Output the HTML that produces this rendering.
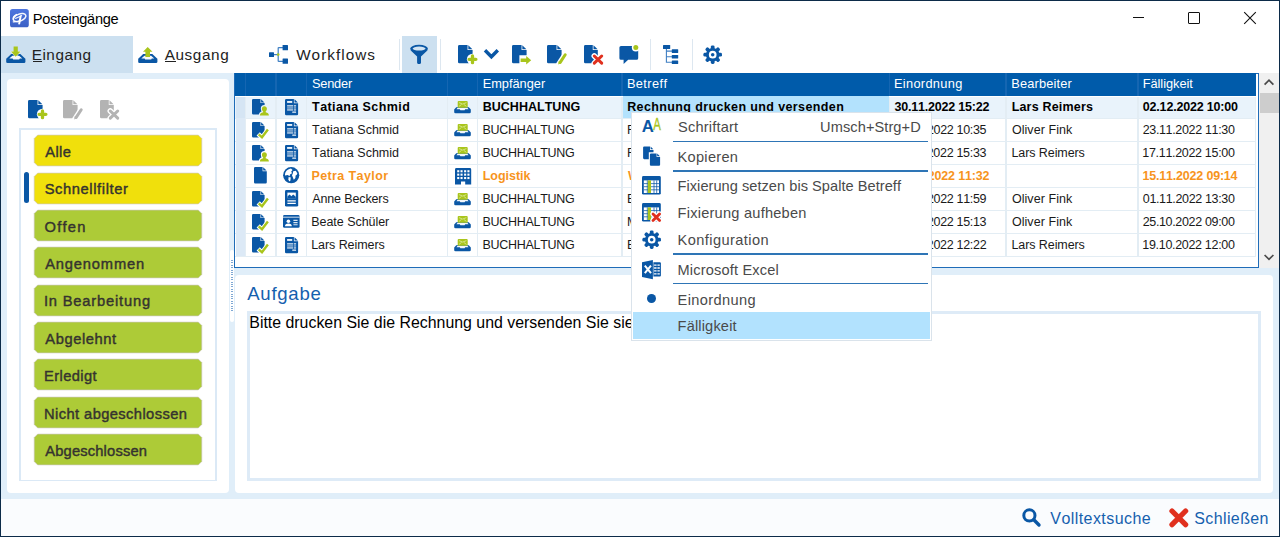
<!DOCTYPE html>
<html lang="de"><head><meta charset="utf-8"><title>Posteingänge</title>
<style>
html,body{margin:0;padding:0}
body{width:1280px;height:537px;position:relative;overflow:hidden;background:#fff;font-family:"Liberation Sans", sans-serif}
.g{position:absolute;left:0;top:0;margin:0;padding:0;display:block}
.t{position:absolute;white-space:nowrap;line-height:1;font-kerning:none}
svg{overflow:visible;display:block}
</style></head>
<body>
<div style="position:absolute;left:0px;top:0px;width:1280px;height:537px;background:#0c2b49;"></div>
<div style="position:absolute;left:1px;top:1px;width:1278px;height:535px;background:#fff;"></div>
<div style="position:absolute;left:1px;top:73px;width:1278px;height:426px;background:#e0eef9;"></div>
<div style="position:absolute;left:1px;top:499px;width:1278px;height:37px;background:#fafcfe;"></div>
<header class="g" id="titlebar">
<svg style="position:absolute;left:10px;top:9px" width="19" height="18.4" viewBox="0 0 19 18.4"><linearGradient id="ag" x1="0" y1="0" x2="0" y2="1"><stop offset="0" stop-color="#4d76df"/><stop offset="1" stop-color="#3b60c5"/></linearGradient><rect x="0" y="0" width="18.8" height="18.3" rx="2.6" fill="url(#ag)"/><ellipse cx="9.6" cy="8.6" rx="6.6" ry="3.5" fill="none" stroke="#fff" stroke-opacity=".95" stroke-width="1.5" transform="rotate(-21 9.6 8.6)"/><path d="M3.4 10.2Q2.6 7.6 6.4 5.6" stroke="#fff" stroke-width="1.5" fill="none" stroke-linecap="round"/><path d="M10.6 7.4L9.2 14.6" stroke="#fff" stroke-width="2" fill="none" stroke-linecap="round"/><path d="M3.2 12.8Q6.4 13 9.4 11.8M5.6 9.4Q8 8.8 11.6 6.6" stroke="#fff" stroke-opacity=".9" stroke-width="1.2" fill="none" stroke-linecap="round"/></svg>
<span id="t1" class="t" style="left:32.80px;top:12.01px;font-size:14.6px;font-weight:400;color:#000;letter-spacing:-0.311px;">Posteingänge</span>
<div style="position:absolute;left:1133px;top:17px;width:11px;height:1px;background:#111;"></div>
<div style="position:absolute;left:1188px;top:12px;width:10px;height:10px;border:1px solid #111;border-radius:1px"></div>
<svg style="position:absolute;left:1243px;top:11px" width="14" height="14" viewBox="0 0 14 14"><path d="M1.2 1.2L12.8 12.8M12.8 1.2L1.2 12.8" stroke="#111" stroke-width="1.1" fill="none"/></svg>
</header>
<nav class="g" id="toolbar">
<div style="position:absolute;left:1px;top:36px;width:132px;height:37px;background:#cce0f0;"></div>
<svg style="position:absolute;left:5.6px;top:46.8px" width="20" height="16" viewBox="0 0 20 16"><path fill="#0a57a5" d="M5.2 7.1H14.3L19.4 11.7V14.7Q19.4 16 18.1 16H1.5Q0.2 16 0.2 14.7V11.7Z"/><path fill="#fff" fill-opacity=".96" d="M6.4 8.7H13.1L16.3 11.6H13.8L13.2 12.6H7.2L6.6 11.6H3.3Z"/><path fill="#fff" fill-opacity=".75" d="M4.4 4L9.7 10.9L15.2 4Z"/><path fill="#a9c51c" d="M7.6 -0.5H11.8V4.6H14.5L9.7 9.8L5 4.6H7.6Z"/></svg>
<span id="t2" class="t" style="left:31.74px;top:47.01px;font-size:15.3px;font-weight:400;color:#222;letter-spacing:0.516px;">Eingang</span>
<div style="position:absolute;left:33px;top:61px;width:9px;height:1px;background:#222;"></div>
<svg style="position:absolute;left:137.6px;top:46.8px" width="20" height="16" viewBox="0 0 20 16"><path fill="#0a57a5" d="M5.2 7.1H14.3L19.4 11.7V14.7Q19.4 16 18.1 16H1.5Q0.2 16 0.2 14.7V11.7Z"/><path fill="#fff" fill-opacity=".96" d="M6.4 8.7H13.1L16.3 11.6H13.8L13.2 12.6H7.2L6.6 11.6H3.3Z"/><path fill="#a9c51c" d="M7.4 10H12V4.8H14.5L9.7 -0.1L5 4.8H7.4Z"/></svg>
<span id="t3" class="t" style="left:164.71px;top:47.01px;font-size:15.3px;font-weight:400;color:#222;letter-spacing:0.604px;">Ausgang</span>
<div style="position:absolute;left:165px;top:61px;width:10.5px;height:1px;background:#222;"></div>
<svg style="position:absolute;left:268.8px;top:45px" width="19.4" height="19" viewBox="0 0 19.4 19"><path d="M5 9.6H9.2M9.2 2.6V16.4M9.2 2.6H14M9.2 16.4H14" stroke="#3f7fc3" stroke-width="1.2" fill="none"/><rect x="0" y="7.3" width="5" height="4.8" rx=".5" fill="#0a57a5"/><rect x="13.6" y="0" width="5.4" height="5.2" rx=".5" fill="#0a57a5"/><rect x="13.6" y="13.6" width="5.4" height="5.2" rx=".5" fill="#0a57a5"/><circle cx="9.2" cy="9.6" r="1.3" fill="#a9c51c"/></svg>
<span id="t4" class="t" style="left:296.17px;top:47.01px;font-size:15.3px;font-weight:400;color:#222;letter-spacing:1.027px;">Workflows</span>
<div style="position:absolute;left:398.75px;top:39px;width:1.5px;height:31px;background:#dde7f0;"></div>
<div style="position:absolute;left:402px;top:36px;width:35px;height:37px;background:#cce0f0;"></div>
<svg style="position:absolute;left:410px;top:45px" width="19" height="19" viewBox="0 0 19 19"><ellipse cx="9.05" cy="3.8" rx="8.85" ry="4" fill="#0a57a5"/><path fill="#0a57a5" d="M0.5 5.2L7.1 11.4V17.8Q7.1 18.9 8.2 18.9H9.9Q11 18.9 11 17.8V11.4L17.6 5.2Z"/><ellipse cx="9.1" cy="3.6" rx="6.45" ry="2" fill="#d3e4f2"/></svg>
<div style="position:absolute;left:439.75px;top:39px;width:1.5px;height:31px;background:#dde7f0;"></div>
<svg style="position:absolute;left:458px;top:44.7px" width="21" height="20" viewBox="0 0 21 20"><path fill="#0a57a5" d="M1.4 0H9.55V5.05H14.6V16.900000000000002Q14.6 18.3 13.2 18.3H1.4Q0 18.3 0 16.900000000000002V1.4Q0 0 1.4 0Z"/><path fill="#0a57a5" d="M10.30 0.2L14.40 4.30H10.30Z"/><circle cx="14.5" cy="14.3" r="5.6" fill="#fff"/><path stroke="#a9c51c" stroke-width="3.3" stroke-linecap="round" d="M14.5 10.9V17.7M11.1 14.3H17.9" fill="none"/></svg>
<svg style="position:absolute;left:483.3px;top:48px" width="17" height="12" viewBox="0 0 17 12"><path d="M2 2.2L8.4 8.8L14.8 2.2" stroke="#0a57a5" stroke-width="3.4" fill="none"/></svg>
<svg style="position:absolute;left:511.8px;top:44.7px" width="21" height="20" viewBox="0 0 21 20"><path fill="#0a57a5" d="M1.4 0H9.55V5.05H14.6V16.900000000000002Q14.6 18.3 13.2 18.3H1.4Q0 18.3 0 16.900000000000002V1.4Q0 0 1.4 0Z"/><path fill="#0a57a5" d="M10.30 0.2L14.40 4.30H10.30Z"/><path fill="#fff" d="M7.4 10.2H15.5L20.5 15.2L15.5 20H7.4Z"/><path fill="#a9c51c" d="M8.6 13.4H14.2V11L19.2 15.2L14.2 19.4V17H8.6Z"/></svg>
<svg style="position:absolute;left:547px;top:44.7px" width="21" height="20" viewBox="0 0 21 20"><path fill="#0a57a5" d="M1.4 0H9.55V5.05H14.6V16.900000000000002Q14.6 18.3 13.2 18.3H1.4Q0 18.3 0 16.900000000000002V1.4Q0 0 1.4 0Z"/><path fill="#0a57a5" d="M10.30 0.2L14.40 4.30H10.30Z"/><path stroke="#fff" stroke-width="5.4" d="M19.3 7.6L11.3 20" fill="none"/><path stroke="#a9c51c" stroke-width="3" stroke-linecap="round" d="M18.2 9.8L13.2 17.4" fill="none"/><path fill="#a9c51c" d="M11.6 16.2L14.2 17.9L11.2 19.4Z"/></svg>
<svg style="position:absolute;left:584px;top:44.7px" width="21" height="20" viewBox="0 0 21 20"><path fill="#0a57a5" d="M1.4 0H8.75V5.05H13.8V16.900000000000002Q13.8 18.3 12.4 18.3H1.4Q0 18.3 0 16.900000000000002V1.4Q0 0 1.4 0Z"/><path fill="#0a57a5" d="M9.50 0.2L13.60 4.30H9.50Z"/><path stroke="#fff" stroke-width="5.6" stroke-linecap="round" d="M10.3 11L17.7 18.2M17.7 11L10.3 18.2" fill="none"/><path stroke="#e0301e" stroke-width="3" stroke-linecap="round" d="M10.3 11L17.7 18.2M17.7 11L10.3 18.2" fill="none"/></svg>
<svg style="position:absolute;left:618.6px;top:44px" width="21" height="21" viewBox="0 -1 21 21"><path fill="#0a57a5" d="M2 1H17.6Q19.2 1 19.2 2.6V13.2Q19.2 14.8 17.6 14.8H9.2L4.6 19V14.8H2Q0.4 14.8 0.4 13.2V2.6Q0.4 1 2 1Z"/><circle cx="16.8" cy="2.5" r="4" fill="#fff"/><circle cx="16.8" cy="2.5" r="2.5" fill="#a9c51c"/></svg>
<div style="position:absolute;left:649.75px;top:39px;width:1.5px;height:31px;background:#dde7f0;"></div>
<svg style="position:absolute;left:663px;top:45px" width="16" height="20" viewBox="0 0 16 20"><rect x="0" y="0" width="7.2" height="4" rx=".5" fill="#0a57a5"/><path d="M3.4 4V17.2H9M3.4 6.1H9M3.4 11.7H9" stroke="#3f7fc3" stroke-width="1.1" fill="none"/><rect x="8.8" y="4.3" width="6.4" height="3.6" rx=".5" fill="#0a57a5"/><rect x="8.8" y="9.9" width="6.4" height="3.6" rx=".5" fill="#0a57a5"/><rect x="8.8" y="15.4" width="6.4" height="3.6" rx=".5" fill="#0a57a5"/></svg>
<div style="position:absolute;left:691.75px;top:39px;width:1.5px;height:31px;background:#dde7f0;"></div>
<svg style="position:absolute;left:702.9px;top:44.8px" width="19.4" height="19.4" viewBox="-0.1 -0.1 20.2 20.2"><circle cx="10" cy="10" r="7.1" fill="#0a57a5"/><rect x="8.05" y="0.35" width="3.9" height="5" rx="1.5" fill="#0a57a5" transform="rotate(0 10 10)"/><rect x="8.05" y="0.35" width="3.9" height="5" rx="1.5" fill="#0a57a5" transform="rotate(45 10 10)"/><rect x="8.05" y="0.35" width="3.9" height="5" rx="1.5" fill="#0a57a5" transform="rotate(90 10 10)"/><rect x="8.05" y="0.35" width="3.9" height="5" rx="1.5" fill="#0a57a5" transform="rotate(135 10 10)"/><rect x="8.05" y="0.35" width="3.9" height="5" rx="1.5" fill="#0a57a5" transform="rotate(180 10 10)"/><rect x="8.05" y="0.35" width="3.9" height="5" rx="1.5" fill="#0a57a5" transform="rotate(225 10 10)"/><rect x="8.05" y="0.35" width="3.9" height="5" rx="1.5" fill="#0a57a5" transform="rotate(270 10 10)"/><rect x="8.05" y="0.35" width="3.9" height="5" rx="1.5" fill="#0a57a5" transform="rotate(315 10 10)"/><circle cx="10" cy="10" r="4" fill="#fff"/><circle cx="10" cy="10" r="1.85" fill="#0a57a5"/></svg>
</nav>
<aside class="g" id="filters">
<div style="position:absolute;left:6.5px;top:79px;width:222.5px;height:414px;background:#fff;border-radius:4px"></div>
<svg style="position:absolute;left:27.8px;top:99.6px" width="21" height="20" viewBox="0 0 21 20"><path fill="#0a57a5" d="M1.4 0H9.55V5.05H14.6V16.900000000000002Q14.6 18.3 13.2 18.3H1.4Q0 18.3 0 16.900000000000002V1.4Q0 0 1.4 0Z"/><path fill="#0a57a5" d="M10.30 0.2L14.40 4.30H10.30Z"/><circle cx="14.5" cy="14.3" r="5.6" fill="#fff"/><path stroke="#a9c51c" stroke-width="3.3" stroke-linecap="round" d="M14.5 10.9V17.7M11.1 14.3H17.9" fill="none"/></svg>
<svg style="position:absolute;left:63.2px;top:99.6px" width="21" height="20" viewBox="0 0 21 20"><path fill="#b3b3b3" d="M1.4 0H9.55V5.05H14.6V16.900000000000002Q14.6 18.3 13.2 18.3H1.4Q0 18.3 0 16.900000000000002V1.4Q0 0 1.4 0Z"/><path fill="#b3b3b3" d="M10.30 0.2L14.40 4.30H10.30Z"/><path stroke="#fff" stroke-width="5.4" d="M19.3 7.6L11.3 20" fill="none"/><path stroke="#b3b3b3" stroke-width="3" stroke-linecap="round" d="M18.2 9.8L13.2 17.4" fill="none"/><path fill="#b3b3b3" d="M11.6 16.2L14.2 17.9L11.2 19.4Z"/></svg>
<svg style="position:absolute;left:99.6px;top:99.6px" width="21" height="20" viewBox="0 0 21 20"><path fill="#b3b3b3" d="M1.4 0H8.75V5.05H13.8V16.900000000000002Q13.8 18.3 12.4 18.3H1.4Q0 18.3 0 16.900000000000002V1.4Q0 0 1.4 0Z"/><path fill="#b3b3b3" d="M9.50 0.2L13.60 4.30H9.50Z"/><path stroke="#fff" stroke-width="5.6" stroke-linecap="round" d="M10.3 11L17.7 18.2M17.7 11L10.3 18.2" fill="none"/><path stroke="#b3b3b3" stroke-width="3" stroke-linecap="round" d="M10.3 11L17.7 18.2M17.7 11L10.3 18.2" fill="none"/></svg>
<div style="position:absolute;left:19px;top:127.5px;width:193.5px;height:350px;border:2px solid #dbe9f6;border-bottom-width:1.5px"></div>
<svg style="position:absolute;left:33.8px;top:135.0px" width="168" height="31" viewBox="-0.2 -0.1 168 31"><polygon points="3.5,0 164.1,0 167.6,3.5 167.6,27.3 164.1,30.8 3.5,30.8 0,27.3 0,3.5" fill="#f0e00c" stroke="#c9c4c0" stroke-opacity=".8" stroke-width=".8"/></svg>
<span id="t5" class="t" style="left:45.26px;top:145.01px;font-size:14.7px;font-weight:400;color:#35332f;letter-spacing:0.360px;-webkit-text-stroke:.42px #35332f;">Alle</span>
<svg style="position:absolute;left:33.8px;top:172.5px" width="168" height="31" viewBox="-0.2 -0.1 168 31"><polygon points="3.5,0 164.1,0 167.6,3.5 167.6,27.3 164.1,30.8 3.5,30.8 0,27.3 0,3.5" fill="#f0e00c" stroke="#c9c4c0" stroke-opacity=".8" stroke-width=".8"/></svg>
<span id="t6" class="t" style="left:44.64px;top:182.01px;font-size:14.7px;font-weight:400;color:#35332f;letter-spacing:0.614px;-webkit-text-stroke:.42px #35332f;">Schnellfilter</span>
<svg style="position:absolute;left:33.8px;top:210.0px" width="168" height="31" viewBox="-0.2 -0.1 168 31"><polygon points="3.5,0 164.1,0 167.6,3.5 167.6,27.3 164.1,30.8 3.5,30.8 0,27.3 0,3.5" fill="#adcb37" stroke="#c9c4c0" stroke-opacity=".8" stroke-width=".8"/></svg>
<span id="t7" class="t" style="left:44.60px;top:220.01px;font-size:14.7px;font-weight:400;color:#35332f;letter-spacing:1.224px;-webkit-text-stroke:.42px #35332f;">Offen</span>
<svg style="position:absolute;left:33.8px;top:247.0px" width="168" height="31" viewBox="-0.2 -0.1 168 31"><polygon points="3.5,0 164.1,0 167.6,3.5 167.6,27.3 164.1,30.8 3.5,30.8 0,27.3 0,3.5" fill="#adcb37" stroke="#c9c4c0" stroke-opacity=".8" stroke-width=".8"/></svg>
<span id="t8" class="t" style="left:45.26px;top:257.01px;font-size:14.7px;font-weight:400;color:#35332f;letter-spacing:0.824px;-webkit-text-stroke:.42px #35332f;">Angenommen</span>
<svg style="position:absolute;left:33.8px;top:284.5px" width="168" height="31" viewBox="-0.2 -0.1 168 31"><polygon points="3.5,0 164.1,0 167.6,3.5 167.6,27.3 164.1,30.8 3.5,30.8 0,27.3 0,3.5" fill="#adcb37" stroke="#c9c4c0" stroke-opacity=".8" stroke-width=".8"/></svg>
<span id="t9" class="t" style="left:43.94px;top:294.01px;font-size:14.7px;font-weight:400;color:#35332f;letter-spacing:0.819px;-webkit-text-stroke:.42px #35332f;">In Bearbeitung</span>
<svg style="position:absolute;left:33.8px;top:322.0px" width="168" height="31" viewBox="-0.2 -0.1 168 31"><polygon points="3.5,0 164.1,0 167.6,3.5 167.6,27.3 164.1,30.8 3.5,30.8 0,27.3 0,3.5" fill="#adcb37" stroke="#c9c4c0" stroke-opacity=".8" stroke-width=".8"/></svg>
<span id="t10" class="t" style="left:45.26px;top:332.01px;font-size:14.7px;font-weight:400;color:#35332f;letter-spacing:0.587px;-webkit-text-stroke:.42px #35332f;">Abgelehnt</span>
<svg style="position:absolute;left:33.8px;top:359.0px" width="168" height="31" viewBox="-0.2 -0.1 168 31"><polygon points="3.5,0 164.1,0 167.6,3.5 167.6,27.3 164.1,30.8 3.5,30.8 0,27.3 0,3.5" fill="#adcb37" stroke="#c9c4c0" stroke-opacity=".8" stroke-width=".8"/></svg>
<span id="t11" class="t" style="left:44.09px;top:369.01px;font-size:14.7px;font-weight:400;color:#35332f;letter-spacing:0.388px;-webkit-text-stroke:.42px #35332f;">Erledigt</span>
<svg style="position:absolute;left:33.8px;top:396.5px" width="168" height="31" viewBox="-0.2 -0.1 168 31"><polygon points="3.5,0 164.1,0 167.6,3.5 167.6,27.3 164.1,30.8 3.5,30.8 0,27.3 0,3.5" fill="#adcb37" stroke="#c9c4c0" stroke-opacity=".8" stroke-width=".8"/></svg>
<span id="t12" class="t" style="left:44.09px;top:407.01px;font-size:14.7px;font-weight:400;color:#35332f;letter-spacing:0.407px;-webkit-text-stroke:.42px #35332f;">Nicht abgeschlossen</span>
<svg style="position:absolute;left:33.8px;top:434.0px" width="168" height="31" viewBox="-0.2 -0.1 168 31"><polygon points="3.5,0 164.1,0 167.6,3.5 167.6,27.3 164.1,30.8 3.5,30.8 0,27.3 0,3.5" fill="#adcb37" stroke="#c9c4c0" stroke-opacity=".8" stroke-width=".8"/></svg>
<span id="t13" class="t" style="left:45.26px;top:444.01px;font-size:14.7px;font-weight:400;color:#35332f;letter-spacing:0.171px;-webkit-text-stroke:.42px #35332f;">Abgeschlossen</span>
<div style="position:absolute;left:24px;top:172px;width:4.5px;height:31px;background:#0a57a5;border-radius:2.5px"></div>
<div style="position:absolute;left:229.5px;top:250px;width:4px;height:72px;background:#fff;border-radius:2px"></div>
<div style="position:absolute;left:230.5px;top:260px;width:2px;height:50.5px;background:repeating-linear-gradient(#7fa8d4 0 1px,#fff 1px 2.4px)"></div>
</aside>
<section class="g" id="grid">
<div style="position:absolute;left:234px;top:72.5px;width:1025px;height:195.5px;background:#fff;box-sizing:border-box;border:1.5px solid #1f6cb8"></div>
<div style="position:absolute;left:235px;top:73px;width:1021px;height:22.5px;background:#005baa;"></div>
<div style="position:absolute;left:244.75px;top:73px;width:1.5px;height:22.5px;background:#1566b2;"></div>
<div style="position:absolute;left:275.25px;top:73px;width:1.5px;height:22.5px;background:#1566b2;"></div>
<div style="position:absolute;left:305.75px;top:73px;width:1.5px;height:22.5px;background:#1566b2;"></div>
<div style="position:absolute;left:446.75px;top:73px;width:1.5px;height:22.5px;background:#1566b2;"></div>
<div style="position:absolute;left:476.75px;top:73px;width:1.5px;height:22.5px;background:#1566b2;"></div>
<div style="position:absolute;left:621.25px;top:73px;width:1.5px;height:22.5px;background:#1566b2;"></div>
<div style="position:absolute;left:888.75px;top:73px;width:1.5px;height:22.5px;background:#1566b2;"></div>
<div style="position:absolute;left:1005.25px;top:73px;width:1.5px;height:22.5px;background:#1566b2;"></div>
<div style="position:absolute;left:1137.25px;top:73px;width:1.5px;height:22.5px;background:#1566b2;"></div>
<span id="t14" class="t" style="left:311.92px;top:78.01px;font-size:12.8px;font-weight:400;color:#fff;letter-spacing:-0.198px;">Sender</span>
<span id="t15" class="t" style="left:482.69px;top:78.01px;font-size:12.8px;font-weight:400;color:#fff;letter-spacing:-0.013px;">Empfänger</span>
<span id="t16" class="t" style="left:626.94px;top:78.01px;font-size:12.8px;font-weight:400;color:#fff;letter-spacing:0.388px;">Betreff</span>
<span id="t17" class="t" style="left:893.94px;top:78.01px;font-size:12.8px;font-weight:400;color:#fff;letter-spacing:0.322px;">Einordnung</span>
<span id="t18" class="t" style="left:1011.24px;top:78.01px;font-size:12.8px;font-weight:400;color:#fff;letter-spacing:0.156px;">Bearbeiter</span>
<span id="t19" class="t" style="left:1142.69px;top:78.01px;font-size:12.8px;font-weight:400;color:#fff;letter-spacing:-0.038px;">Fälligkeit</span>
<div style="position:absolute;left:235px;top:95px;width:1021px;height:23px;background:#e9f3fb;"></div>
<div style="position:absolute;left:622.5px;top:95px;width:267px;height:22.5px;background:#b3e2fd;"></div>
<div style="position:absolute;left:235.5px;top:95px;width:9.5px;height:23px;background:#d5e5f4;"></div>
<div style="position:absolute;left:235px;top:117.6px;width:1021px;height:1px;background:#e3edf4;"></div>
<svg style="position:absolute;left:252.4px;top:98.6px" width="18" height="17" viewBox="0 0 18 17"><path fill="#0a57a5" d="M1.2 0H8.50V4.10H12.6V14.3Q12.6 15.5 11.4 15.5H1.2Q0 15.5 0 14.3V1.2Q0 0 1.2 0Z"/><path fill="#0a57a5" d="M9.10 0.2L12.40 3.50H9.10Z"/><path d="M12.4 7.2C13.9 7.2 14.9 8.3 14.9 9.8C14.9 11 14.4 11.9 13.6 12.5L13.7 13.2C15.6 13.6 16.9 14.4 16.9 16.4H7.9C7.9 14.4 9.2 13.6 11.1 13.2L11.2 12.5C10.4 11.9 9.9 11 9.9 9.8C9.9 8.3 10.9 7.2 12.4 7.2Z" fill="#e9f3fb" stroke="#e9f3fb" stroke-width="2.2" stroke-linejoin="round"/><path d="M12.4 7.2C13.9 7.2 14.9 8.3 14.9 9.8C14.9 11 14.4 11.9 13.6 12.5L13.7 13.2C15.6 13.6 16.9 14.4 16.9 16.4H7.9C7.9 14.4 9.2 13.6 11.1 13.2L11.2 12.5C10.4 11.9 9.9 11 9.9 9.8C9.9 8.3 10.9 7.2 12.4 7.2Z" fill="#a9c51c"/></svg>
<svg style="position:absolute;left:284.9px;top:98.7px" width="14" height="17" viewBox="0 0 14 17"><path fill="#0a57a5" d="M1.2 0H8.90V4.20H13.1V15.100000000000001Q13.1 16.3 11.9 16.3H1.2Q0 16.3 0 15.100000000000001V1.2Q0 0 1.2 0Z"/><path fill="#0a57a5" d="M9.50 0.2L12.90 3.60H9.50Z"/><rect x="2.1" y="2" width="5.1" height="1.9" fill="#fff" fill-opacity=".92"/><rect x="2.1" y="6.3" width="6" height="1.1" fill="#fff" fill-opacity="0.95"/><rect x="8.8" y="6.3" width="2.3" height="1.1" fill="#fff" fill-opacity="0.95"/><rect x="2.1" y="7.9" width="6" height="2.0" fill="#fff" fill-opacity="0.42"/><rect x="8.8" y="7.9" width="2.3" height="2.0" fill="#fff" fill-opacity="0.42"/><rect x="2.1" y="10.4" width="6" height="1.1" fill="#fff" fill-opacity="0.95"/><rect x="8.8" y="10.4" width="2.3" height="1.1" fill="#fff" fill-opacity="0.95"/><rect x="7.2" y="12.6" width="3.9" height="1.1" rx=".5" fill="#fff" fill-opacity=".95"/></svg>
<svg style="position:absolute;left:454.1px;top:100.7px" width="17" height="12.4" viewBox="0 0 17 12.4"><path fill="#e9f3fb" stroke="#e9f3fb" stroke-width="1.6" d="M2.2 6.2L0.2 8.6V11Q0.2 12.3 1.5 12.3H15.5Q16.8 12.3 16.8 11V8.6L14.8 6.2Z"/><path fill="#0a57a5" d="M2.2 6.2L0.2 8.6V11Q0.2 12.3 1.5 12.3H15.5Q16.8 12.3 16.8 11V8.6L14.8 6.2Z"/><path fill="#fff" fill-opacity=".95" d="M3.4 7.1H13.6L14.6 8.2H11.2L10.6 9.3H6.4L5.8 8.2H2.4Z"/><rect x="3.7" y="0" width="10" height="6.7" rx="1" fill="#a9c51c"/><path stroke="#dcebA0" stroke-width=".8" d="M5 1.6Q8.7 4.6 12.4 1.6M5 5.4L7.6 3.4M12.4 5.4L9.8 3.4" fill="none"/></svg>
<span id="t20" class="t" style="left:312.12px;top:101.00px;font-size:12.5px;font-weight:700;color:#000;letter-spacing:0.408px;">Tatiana Schmid</span>
<span id="t21" class="t" style="left:482.66px;top:101.00px;font-size:12.5px;font-weight:700;color:#000;letter-spacing:0.031px;">BUCHHALTUNG</span>
<span id="t22" class="t" style="left:627.16px;top:101.00px;font-size:12.5px;font-weight:700;color:#000;letter-spacing:0.380px;">Rechnung drucken und versenden</span>
<span id="t23" class="t" style="left:894.47px;top:101.00px;font-size:12.5px;font-weight:700;color:#000;letter-spacing:-0.200px;">30.11.2022 15:22</span>
<span id="t24" class="t" style="left:1011.66px;top:101.00px;font-size:12.5px;font-weight:700;color:#000;letter-spacing:0.185px;">Lars Reimers</span>
<span id="t25" class="t" style="left:1142.80px;top:101.00px;font-size:12.5px;font-weight:700;color:#000;letter-spacing:-0.187px;">02.12.2022 10:00</span>
<div style="position:absolute;left:235.5px;top:118px;width:9.5px;height:23px;background:#dce9f6;"></div>
<div style="position:absolute;left:235px;top:140.6px;width:1021px;height:1px;background:#e3edf4;"></div>
<svg style="position:absolute;left:252.4px;top:121.6px" width="18" height="18" viewBox="0 0 18 18"><path fill="#0a57a5" d="M1.2 0H8.50V4.10H12.6V14.3Q12.6 15.5 11.4 15.5H1.2Q0 15.5 0 14.3V1.2Q0 0 1.2 0Z"/><path fill="#0a57a5" d="M9.10 0.2L12.40 3.50H9.10Z"/><path stroke="#fff" stroke-width="4.6" d="M6.2 11.9L10 15.6L16.4 7" fill="none"/><path stroke="#a9c51c" stroke-width="2.4" d="M6.7 12.3L10 15.3L15.9 7.5" fill="none"/></svg>
<svg style="position:absolute;left:284.9px;top:121.7px" width="14" height="17" viewBox="0 0 14 17"><path fill="#0a57a5" d="M1.2 0H8.90V4.20H13.1V15.100000000000001Q13.1 16.3 11.9 16.3H1.2Q0 16.3 0 15.100000000000001V1.2Q0 0 1.2 0Z"/><path fill="#0a57a5" d="M9.50 0.2L12.90 3.60H9.50Z"/><rect x="2.1" y="2" width="5.1" height="1.9" fill="#fff" fill-opacity=".92"/><rect x="2.1" y="6.3" width="6" height="1.1" fill="#fff" fill-opacity="0.95"/><rect x="8.8" y="6.3" width="2.3" height="1.1" fill="#fff" fill-opacity="0.95"/><rect x="2.1" y="7.9" width="6" height="2.0" fill="#fff" fill-opacity="0.42"/><rect x="8.8" y="7.9" width="2.3" height="2.0" fill="#fff" fill-opacity="0.42"/><rect x="2.1" y="10.4" width="6" height="1.1" fill="#fff" fill-opacity="0.95"/><rect x="8.8" y="10.4" width="2.3" height="1.1" fill="#fff" fill-opacity="0.95"/><rect x="7.2" y="12.6" width="3.9" height="1.1" rx=".5" fill="#fff" fill-opacity=".95"/></svg>
<svg style="position:absolute;left:454.1px;top:123.7px" width="17" height="12.4" viewBox="0 0 17 12.4"><path fill="#fff" stroke="#fff" stroke-width="1.6" d="M2.2 6.2L0.2 8.6V11Q0.2 12.3 1.5 12.3H15.5Q16.8 12.3 16.8 11V8.6L14.8 6.2Z"/><path fill="#0a57a5" d="M2.2 6.2L0.2 8.6V11Q0.2 12.3 1.5 12.3H15.5Q16.8 12.3 16.8 11V8.6L14.8 6.2Z"/><path fill="#fff" fill-opacity=".95" d="M3.4 7.1H13.6L14.6 8.2H11.2L10.6 9.3H6.4L5.8 8.2H2.4Z"/><rect x="3.7" y="0" width="10" height="6.7" rx="1" fill="#a9c51c"/><path stroke="#dcebA0" stroke-width=".8" d="M5 1.6Q8.7 4.6 12.4 1.6M5 5.4L7.6 3.4M12.4 5.4L9.8 3.4" fill="none"/></svg>
<span id="t26" class="t" style="left:311.97px;top:124.00px;font-size:12.5px;font-weight:400;color:#1a1a1a;letter-spacing:0.017px;">Tatiana Schmid</span>
<span id="t27" class="t" style="left:482.47px;top:124.00px;font-size:12.5px;font-weight:400;color:#1a1a1a;letter-spacing:-0.293px;">BUCHHALTUNG</span>
<span id="t28" class="t" style="left:626.97px;top:124.00px;font-size:12.5px;font-weight:400;color:#1a1a1a;letter-spacing:-0.197px;">Rechnung prüfen</span>
<span id="t29" class="t" style="left:894.12px;top:124.00px;font-size:12.5px;font-weight:400;color:#1a1a1a;letter-spacing:-0.329px;">21.11.2022 10:35</span>
<span id="t30" class="t" style="left:1011.91px;top:124.00px;font-size:12.5px;font-weight:400;color:#1a1a1a;letter-spacing:0.061px;">Oliver Fink</span>
<span id="t31" class="t" style="left:1142.67px;top:124.00px;font-size:12.5px;font-weight:400;color:#1a1a1a;letter-spacing:-0.341px;">23.11.2022 11:30</span>
<div style="position:absolute;left:235.5px;top:141px;width:9.5px;height:23px;background:#dce9f6;"></div>
<div style="position:absolute;left:235px;top:163.6px;width:1021px;height:1px;background:#e3edf4;"></div>
<svg style="position:absolute;left:252.4px;top:144.6px" width="18" height="17" viewBox="0 0 18 17"><path fill="#0a57a5" d="M1.2 0H8.50V4.10H12.6V14.3Q12.6 15.5 11.4 15.5H1.2Q0 15.5 0 14.3V1.2Q0 0 1.2 0Z"/><path fill="#0a57a5" d="M9.10 0.2L12.40 3.50H9.10Z"/><path d="M12.4 7.2C13.9 7.2 14.9 8.3 14.9 9.8C14.9 11 14.4 11.9 13.6 12.5L13.7 13.2C15.6 13.6 16.9 14.4 16.9 16.4H7.9C7.9 14.4 9.2 13.6 11.1 13.2L11.2 12.5C10.4 11.9 9.9 11 9.9 9.8C9.9 8.3 10.9 7.2 12.4 7.2Z" fill="#fff" stroke="#fff" stroke-width="2.2" stroke-linejoin="round"/><path d="M12.4 7.2C13.9 7.2 14.9 8.3 14.9 9.8C14.9 11 14.4 11.9 13.6 12.5L13.7 13.2C15.6 13.6 16.9 14.4 16.9 16.4H7.9C7.9 14.4 9.2 13.6 11.1 13.2L11.2 12.5C10.4 11.9 9.9 11 9.9 9.8C9.9 8.3 10.9 7.2 12.4 7.2Z" fill="#a9c51c"/></svg>
<svg style="position:absolute;left:284.9px;top:144.7px" width="14" height="17" viewBox="0 0 14 17"><path fill="#0a57a5" d="M1.2 0H8.90V4.20H13.1V15.100000000000001Q13.1 16.3 11.9 16.3H1.2Q0 16.3 0 15.100000000000001V1.2Q0 0 1.2 0Z"/><path fill="#0a57a5" d="M9.50 0.2L12.90 3.60H9.50Z"/><rect x="2.1" y="2" width="5.1" height="1.9" fill="#fff" fill-opacity=".92"/><rect x="2.1" y="6.3" width="6" height="1.1" fill="#fff" fill-opacity="0.95"/><rect x="8.8" y="6.3" width="2.3" height="1.1" fill="#fff" fill-opacity="0.95"/><rect x="2.1" y="7.9" width="6" height="2.0" fill="#fff" fill-opacity="0.42"/><rect x="8.8" y="7.9" width="2.3" height="2.0" fill="#fff" fill-opacity="0.42"/><rect x="2.1" y="10.4" width="6" height="1.1" fill="#fff" fill-opacity="0.95"/><rect x="8.8" y="10.4" width="2.3" height="1.1" fill="#fff" fill-opacity="0.95"/><rect x="7.2" y="12.6" width="3.9" height="1.1" rx=".5" fill="#fff" fill-opacity=".95"/></svg>
<svg style="position:absolute;left:454.1px;top:146.7px" width="17" height="12.4" viewBox="0 0 17 12.4"><path fill="#fff" stroke="#fff" stroke-width="1.6" d="M2.2 6.2L0.2 8.6V11Q0.2 12.3 1.5 12.3H15.5Q16.8 12.3 16.8 11V8.6L14.8 6.2Z"/><path fill="#0a57a5" d="M2.2 6.2L0.2 8.6V11Q0.2 12.3 1.5 12.3H15.5Q16.8 12.3 16.8 11V8.6L14.8 6.2Z"/><path fill="#fff" fill-opacity=".95" d="M3.4 7.1H13.6L14.6 8.2H11.2L10.6 9.3H6.4L5.8 8.2H2.4Z"/><rect x="3.7" y="0" width="10" height="6.7" rx="1" fill="#a9c51c"/><path stroke="#dcebA0" stroke-width=".8" d="M5 1.6Q8.7 4.6 12.4 1.6M5 5.4L7.6 3.4M12.4 5.4L9.8 3.4" fill="none"/></svg>
<span id="t32" class="t" style="left:311.97px;top:147.00px;font-size:12.5px;font-weight:400;color:#1a1a1a;letter-spacing:0.017px;">Tatiana Schmid</span>
<span id="t33" class="t" style="left:482.47px;top:147.00px;font-size:12.5px;font-weight:400;color:#1a1a1a;letter-spacing:-0.293px;">BUCHHALTUNG</span>
<span id="t34" class="t" style="left:626.97px;top:147.00px;font-size:12.5px;font-weight:400;color:#1a1a1a;letter-spacing:-0.197px;">Rechnung prüfen</span>
<span id="t35" class="t" style="left:893.81px;top:147.00px;font-size:12.5px;font-weight:400;color:#1a1a1a;letter-spacing:-0.306px;">15.11.2022 15:33</span>
<span id="t36" class="t" style="left:1011.47px;top:147.00px;font-size:12.5px;font-weight:400;color:#1a1a1a;letter-spacing:-0.087px;">Lars Reimers</span>
<span id="t37" class="t" style="left:1142.36px;top:147.00px;font-size:12.5px;font-weight:400;color:#1a1a1a;letter-spacing:-0.320px;">17.11.2022 15:00</span>
<div style="position:absolute;left:235.5px;top:164px;width:9.5px;height:23px;background:#dce9f6;"></div>
<div style="position:absolute;left:235px;top:186.6px;width:1021px;height:1px;background:#e3edf4;"></div>
<svg style="position:absolute;left:254.3px;top:167.3px" width="14" height="17" viewBox="0 0 14 17"><path fill="#0a57a5" d="M1.2 0H8.60V4.20H12.8V15.2Q12.8 16.4 11.600000000000001 16.4H1.2Q0 16.4 0 15.2V1.2Q0 0 1.2 0Z"/><path fill="#0a57a5" d="M9.20 0.2L12.60 3.60H9.20Z"/></svg>
<svg style="position:absolute;left:283.1px;top:167.3px" width="16.4" height="16.4" viewBox="0 0 16.4 16.4"><circle cx="8.2" cy="8.2" r="8.1" fill="#0a57a5"/><path fill="#fff" d="M2.4 5.4Q4.4 2 8 1.6L9.6 3L8.2 4.6L9 6.2L7 7.4L6.6 9.2L4.8 8L2 8.4Q1.8 6.8 2.4 5.4Z"/><path fill="#fff" d="M5.6 10L7.8 10.6L7.4 13.2L6.2 14.4L5.4 12.2Z"/><path fill="#fff" d="M10.2 4.2L12.8 3.8L14.4 6.4L13.6 8L12.6 8.4L12.4 11L10.8 12.8L9.8 10.2L9 8.2L9.8 6.4Z"/></svg>
<svg style="position:absolute;left:454.6px;top:167.5px" width="16.4" height="16.6" viewBox="0 0 16.4 16.6"><path fill="#0a57a5" d="M1.4 0H14.8Q16.2 0 16.2 1.4V16.4H10.2V13.4H6V16.4H0V1.4Q0 0 1.4 0Z"/><rect x="2.20" y="2.20" width="2.1" height="2.1" fill="#fff"/><rect x="5.50" y="2.20" width="2.1" height="2.1" fill="#fff"/><rect x="9.10" y="2.20" width="2.1" height="2.1" fill="#fff"/><rect x="12.40" y="2.20" width="2.1" height="2.1" fill="#fff"/><rect x="2.20" y="5.60" width="2.1" height="2.1" fill="#fff"/><rect x="5.50" y="5.60" width="2.1" height="2.1" fill="#fff"/><rect x="9.10" y="5.60" width="2.1" height="2.1" fill="#fff"/><rect x="12.40" y="5.60" width="2.1" height="2.1" fill="#fff"/><rect x="2.20" y="9.00" width="2.1" height="2.1" fill="#fff"/><rect x="5.50" y="9.00" width="2.1" height="2.1" fill="#fff"/><rect x="9.10" y="9.00" width="2.1" height="2.1" fill="#fff"/><rect x="12.40" y="9.00" width="2.1" height="2.1" fill="#fff"/></svg>
<span id="t38" class="t" style="left:311.41px;top:170.00px;font-size:12.5px;font-weight:700;color:#f7941d;letter-spacing:0.400px;">Petra Taylor</span>
<span id="t39" class="t" style="left:482.66px;top:170.00px;font-size:12.5px;font-weight:700;color:#f7941d;letter-spacing:-0.014px;">Logistik</span>
<span id="t40" class="t" style="left:628.00px;top:170.00px;font-size:12.5px;font-weight:700;color:#f7941d;letter-spacing:0.064px;">Wareneingang prüfen</span>
<span id="t41" class="t" style="left:893.97px;top:170.00px;font-size:12.5px;font-weight:700;color:#f7941d;letter-spacing:-0.167px;">14.11.2022 11:32</span>
<span id="t42" class="t" style="left:1142.52px;top:170.00px;font-size:12.5px;font-weight:700;color:#f7941d;letter-spacing:-0.197px;">15.11.2022 09:14</span>
<div style="position:absolute;left:235.5px;top:187px;width:9.5px;height:23px;background:#dce9f6;"></div>
<div style="position:absolute;left:235px;top:209.6px;width:1021px;height:1px;background:#e3edf4;"></div>
<svg style="position:absolute;left:252.4px;top:190.6px" width="18" height="18" viewBox="0 0 18 18"><path fill="#0a57a5" d="M1.2 0H8.50V4.10H12.6V14.3Q12.6 15.5 11.4 15.5H1.2Q0 15.5 0 14.3V1.2Q0 0 1.2 0Z"/><path fill="#0a57a5" d="M9.10 0.2L12.40 3.50H9.10Z"/><path stroke="#fff" stroke-width="4.6" d="M6.2 11.9L10 15.6L16.4 7" fill="none"/><path stroke="#a9c51c" stroke-width="2.4" d="M6.7 12.3L10 15.3L15.9 7.5" fill="none"/></svg>
<svg style="position:absolute;left:284.9px;top:190.2px" width="13.4" height="17" viewBox="0 0 13.4 17"><rect x="0" y="0" width="13.2" height="16.6" rx="1.4" fill="#0a57a5"/><rect x="2.4" y="2.6" width="8.4" height="5.6" fill="#fff"/><path fill="#0a57a5" d="M2.4 8.2V6.6L4.6 4.6L6.4 6.2L8.2 4.4L10.8 6.8V8.2Z"/><path stroke="#fff" stroke-width="1.3" d="M2.4 10.8H10.8M2.4 13.4H10.8" fill="none"/></svg>
<svg style="position:absolute;left:454.1px;top:192.7px" width="17" height="12.4" viewBox="0 0 17 12.4"><path fill="#fff" stroke="#fff" stroke-width="1.6" d="M2.2 6.2L0.2 8.6V11Q0.2 12.3 1.5 12.3H15.5Q16.8 12.3 16.8 11V8.6L14.8 6.2Z"/><path fill="#0a57a5" d="M2.2 6.2L0.2 8.6V11Q0.2 12.3 1.5 12.3H15.5Q16.8 12.3 16.8 11V8.6L14.8 6.2Z"/><path fill="#fff" fill-opacity=".95" d="M3.4 7.1H13.6L14.6 8.2H11.2L10.6 9.3H6.4L5.8 8.2H2.4Z"/><rect x="3.7" y="0" width="10" height="6.7" rx="1" fill="#a9c51c"/><path stroke="#dcebA0" stroke-width=".8" d="M5 1.6Q8.7 4.6 12.4 1.6M5 5.4L7.6 3.4M12.4 5.4L9.8 3.4" fill="none"/></svg>
<span id="t43" class="t" style="left:312.22px;top:193.00px;font-size:12.5px;font-weight:400;color:#1a1a1a;letter-spacing:-0.128px;">Anne Beckers</span>
<span id="t44" class="t" style="left:482.47px;top:193.00px;font-size:12.5px;font-weight:400;color:#1a1a1a;letter-spacing:-0.293px;">BUCHHALTUNG</span>
<span id="t45" class="t" style="left:626.97px;top:193.00px;font-size:12.5px;font-weight:400;color:#1a1a1a;letter-spacing:-0.197px;">Eingangsrechnung buchen</span>
<span id="t46" class="t" style="left:894.12px;top:193.00px;font-size:12.5px;font-weight:400;color:#1a1a1a;letter-spacing:-0.325px;">28.10.2022 11:59</span>
<span id="t47" class="t" style="left:1011.91px;top:193.00px;font-size:12.5px;font-weight:400;color:#1a1a1a;letter-spacing:0.061px;">Oliver Fink</span>
<span id="t48" class="t" style="left:1142.80px;top:193.00px;font-size:12.5px;font-weight:400;color:#1a1a1a;letter-spacing:-0.350px;">01.11.2022 13:30</span>
<div style="position:absolute;left:235.5px;top:210px;width:9.5px;height:23px;background:#dce9f6;"></div>
<div style="position:absolute;left:235px;top:232.6px;width:1021px;height:1px;background:#e3edf4;"></div>
<svg style="position:absolute;left:252.4px;top:213.6px" width="18" height="18" viewBox="0 0 18 18"><path fill="#0a57a5" d="M1.2 0H8.50V4.10H12.6V14.3Q12.6 15.5 11.4 15.5H1.2Q0 15.5 0 14.3V1.2Q0 0 1.2 0Z"/><path fill="#0a57a5" d="M9.10 0.2L12.40 3.50H9.10Z"/><path stroke="#fff" stroke-width="4.6" d="M6.2 11.9L10 15.6L16.4 7" fill="none"/><path stroke="#a9c51c" stroke-width="2.4" d="M6.7 12.3L10 15.3L15.9 7.5" fill="none"/></svg>
<svg style="position:absolute;left:282.9px;top:215.3px" width="16.6" height="13" viewBox="0 0 16.6 13"><rect x="0" y="0" width="16.6" height="12.8" rx="1.4" fill="#0a57a5"/><path stroke="#fff" stroke-opacity=".8" stroke-width="1" d="M0 2.2H16.6" fill="none"/><circle cx="5.4" cy="6.2" r="1.8" fill="#fff"/><path fill="#fff" d="M2 11.2Q2 8.6 5.4 8.6T8.8 11.2Z"/><path stroke="#fff" stroke-opacity=".85" stroke-width="1.1" d="M10.4 5.4H14.6M10.4 7.6H14.6M10.4 9.8H14.6" fill="none"/></svg>
<svg style="position:absolute;left:454.1px;top:215.7px" width="17" height="12.4" viewBox="0 0 17 12.4"><path fill="#fff" stroke="#fff" stroke-width="1.6" d="M2.2 6.2L0.2 8.6V11Q0.2 12.3 1.5 12.3H15.5Q16.8 12.3 16.8 11V8.6L14.8 6.2Z"/><path fill="#0a57a5" d="M2.2 6.2L0.2 8.6V11Q0.2 12.3 1.5 12.3H15.5Q16.8 12.3 16.8 11V8.6L14.8 6.2Z"/><path fill="#fff" fill-opacity=".95" d="M3.4 7.1H13.6L14.6 8.2H11.2L10.6 9.3H6.4L5.8 8.2H2.4Z"/><rect x="3.7" y="0" width="10" height="6.7" rx="1" fill="#a9c51c"/><path stroke="#dcebA0" stroke-width=".8" d="M5 1.6Q8.7 4.6 12.4 1.6M5 5.4L7.6 3.4M12.4 5.4L9.8 3.4" fill="none"/></svg>
<span id="t49" class="t" style="left:311.22px;top:216.00px;font-size:12.5px;font-weight:400;color:#1a1a1a;letter-spacing:-0.038px;">Beate Schüler</span>
<span id="t50" class="t" style="left:482.47px;top:216.00px;font-size:12.5px;font-weight:400;color:#1a1a1a;letter-spacing:-0.293px;">BUCHHALTUNG</span>
<span id="t51" class="t" style="left:626.97px;top:216.00px;font-size:12.5px;font-weight:400;color:#1a1a1a;letter-spacing:-0.197px;">Mahnung versenden</span>
<span id="t52" class="t" style="left:894.12px;top:216.00px;font-size:12.5px;font-weight:400;color:#1a1a1a;letter-spacing:-0.327px;">21.10.2022 15:13</span>
<span id="t53" class="t" style="left:1011.91px;top:216.00px;font-size:12.5px;font-weight:400;color:#1a1a1a;letter-spacing:0.061px;">Oliver Fink</span>
<span id="t54" class="t" style="left:1142.67px;top:216.00px;font-size:12.5px;font-weight:400;color:#1a1a1a;letter-spacing:-0.341px;">25.10.2022 09:00</span>
<div style="position:absolute;left:235.5px;top:233px;width:9.5px;height:23px;background:#dce9f6;"></div>
<div style="position:absolute;left:235px;top:255.6px;width:1021px;height:1px;background:#e3edf4;"></div>
<svg style="position:absolute;left:252.4px;top:236.6px" width="18" height="18" viewBox="0 0 18 18"><path fill="#0a57a5" d="M1.2 0H8.50V4.10H12.6V14.3Q12.6 15.5 11.4 15.5H1.2Q0 15.5 0 14.3V1.2Q0 0 1.2 0Z"/><path fill="#0a57a5" d="M9.10 0.2L12.40 3.50H9.10Z"/><path stroke="#fff" stroke-width="4.6" d="M6.2 11.9L10 15.6L16.4 7" fill="none"/><path stroke="#a9c51c" stroke-width="2.4" d="M6.7 12.3L10 15.3L15.9 7.5" fill="none"/></svg>
<svg style="position:absolute;left:284.9px;top:236.7px" width="14" height="17" viewBox="0 0 14 17"><path fill="#0a57a5" d="M1.2 0H8.90V4.20H13.1V15.100000000000001Q13.1 16.3 11.9 16.3H1.2Q0 16.3 0 15.100000000000001V1.2Q0 0 1.2 0Z"/><path fill="#0a57a5" d="M9.50 0.2L12.90 3.60H9.50Z"/><rect x="2.1" y="2" width="5.1" height="1.9" fill="#fff" fill-opacity=".92"/><rect x="2.1" y="6.3" width="6" height="1.1" fill="#fff" fill-opacity="0.95"/><rect x="8.8" y="6.3" width="2.3" height="1.1" fill="#fff" fill-opacity="0.95"/><rect x="2.1" y="7.9" width="6" height="2.0" fill="#fff" fill-opacity="0.42"/><rect x="8.8" y="7.9" width="2.3" height="2.0" fill="#fff" fill-opacity="0.42"/><rect x="2.1" y="10.4" width="6" height="1.1" fill="#fff" fill-opacity="0.95"/><rect x="8.8" y="10.4" width="2.3" height="1.1" fill="#fff" fill-opacity="0.95"/><rect x="7.2" y="12.6" width="3.9" height="1.1" rx=".5" fill="#fff" fill-opacity=".95"/></svg>
<svg style="position:absolute;left:454.1px;top:238.7px" width="17" height="12.4" viewBox="0 0 17 12.4"><path fill="#fff" stroke="#fff" stroke-width="1.6" d="M2.2 6.2L0.2 8.6V11Q0.2 12.3 1.5 12.3H15.5Q16.8 12.3 16.8 11V8.6L14.8 6.2Z"/><path fill="#0a57a5" d="M2.2 6.2L0.2 8.6V11Q0.2 12.3 1.5 12.3H15.5Q16.8 12.3 16.8 11V8.6L14.8 6.2Z"/><path fill="#fff" fill-opacity=".95" d="M3.4 7.1H13.6L14.6 8.2H11.2L10.6 9.3H6.4L5.8 8.2H2.4Z"/><rect x="3.7" y="0" width="10" height="6.7" rx="1" fill="#a9c51c"/><path stroke="#dcebA0" stroke-width=".8" d="M5 1.6Q8.7 4.6 12.4 1.6M5 5.4L7.6 3.4M12.4 5.4L9.8 3.4" fill="none"/></svg>
<span id="t55" class="t" style="left:311.22px;top:239.00px;font-size:12.5px;font-weight:400;color:#1a1a1a;letter-spacing:-0.074px;">Lars Reimers</span>
<span id="t56" class="t" style="left:482.47px;top:239.00px;font-size:12.5px;font-weight:400;color:#1a1a1a;letter-spacing:-0.293px;">BUCHHALTUNG</span>
<span id="t57" class="t" style="left:626.97px;top:239.00px;font-size:12.5px;font-weight:400;color:#1a1a1a;letter-spacing:-0.197px;">Eingangsrechnung prüfen</span>
<span id="t58" class="t" style="left:893.81px;top:239.00px;font-size:12.5px;font-weight:400;color:#1a1a1a;letter-spacing:-0.300px;">17.10.2022 12:22</span>
<span id="t59" class="t" style="left:1011.47px;top:239.00px;font-size:12.5px;font-weight:400;color:#1a1a1a;letter-spacing:-0.087px;">Lars Reimers</span>
<span id="t60" class="t" style="left:1142.36px;top:239.00px;font-size:12.5px;font-weight:400;color:#1a1a1a;letter-spacing:-0.320px;">19.10.2022 12:00</span>
<div style="position:absolute;left:244.7px;top:95.5px;width:1.6px;height:160.5px;background:#e3edf4;"></div>
<div style="position:absolute;left:275.2px;top:95.5px;width:1.6px;height:160.5px;background:#e3edf4;"></div>
<div style="position:absolute;left:305.7px;top:95.5px;width:1.6px;height:160.5px;background:#e3edf4;"></div>
<div style="position:absolute;left:446.7px;top:95.5px;width:1.6px;height:160.5px;background:#e3edf4;"></div>
<div style="position:absolute;left:476.7px;top:95.5px;width:1.6px;height:160.5px;background:#e3edf4;"></div>
<div style="position:absolute;left:621.2px;top:95.5px;width:1.6px;height:160.5px;background:#e3edf4;"></div>
<div style="position:absolute;left:888.7px;top:95.5px;width:1.6px;height:160.5px;background:#e3edf4;"></div>
<div style="position:absolute;left:1005.2px;top:95.5px;width:1.6px;height:160.5px;background:#e3edf4;"></div>
<div style="position:absolute;left:1137.2px;top:95.5px;width:1.6px;height:160.5px;background:#e3edf4;"></div>
<div style="position:absolute;left:1255px;top:95.5px;width:1px;height:160.5px;background:#e3edf4;"></div>
<div style="position:absolute;left:235px;top:94.5px;width:1021px;height:1px;background:#005baa;"></div>
<div style="position:absolute;left:244.75px;top:94.5px;width:1.5px;height:1px;background:#1566b2;"></div>
<div style="position:absolute;left:275.25px;top:94.5px;width:1.5px;height:1px;background:#1566b2;"></div>
<div style="position:absolute;left:305.75px;top:94.5px;width:1.5px;height:1px;background:#1566b2;"></div>
<div style="position:absolute;left:446.75px;top:94.5px;width:1.5px;height:1px;background:#1566b2;"></div>
<div style="position:absolute;left:476.75px;top:94.5px;width:1.5px;height:1px;background:#1566b2;"></div>
<div style="position:absolute;left:621.25px;top:94.5px;width:1.5px;height:1px;background:#1566b2;"></div>
<div style="position:absolute;left:888.75px;top:94.5px;width:1.5px;height:1px;background:#1566b2;"></div>
<div style="position:absolute;left:1005.25px;top:94.5px;width:1.5px;height:1px;background:#1566b2;"></div>
<div style="position:absolute;left:1137.25px;top:94.5px;width:1.5px;height:1px;background:#1566b2;"></div>
<div style="position:absolute;left:235px;top:95.5px;width:1021px;height:0.9px;background:#fff;"></div>
<div style="position:absolute;left:622.8px;top:95.5px;width:266px;height:1.2px;background:#b3e2fd;"></div>
<div style="position:absolute;left:1259px;top:72.5px;width:20px;height:195.5px;background:#f0f0f0;"></div>
<div style="position:absolute;left:1260px;top:93px;width:18.5px;height:19.5px;background:#cdcdcd;"></div>
<svg style="position:absolute;left:1262px;top:76px" width="14" height="12" viewBox="0 0 14 12"><path d="M2.6 8.6L7 4.2L11.4 8.6" stroke="#4a4a4a" stroke-width="1.7" fill="none"/></svg>
<svg style="position:absolute;left:1262px;top:251px" width="14" height="12" viewBox="0 0 14 12"><path d="M2.6 4L7 8.4L11.4 4" stroke="#4a4a4a" stroke-width="1.7" fill="none"/></svg>
</section>
<section class="g" id="detail">
<div style="position:absolute;left:234.5px;top:274.5px;width:1038.5px;height:218.5px;background:#fff;border-radius:4px"></div>
<span id="t61" class="t" style="left:247.25px;top:284.80px;font-size:18.6px;font-weight:400;color:#1560ae;letter-spacing:0.713px;">Aufgabe</span>
<div style="position:absolute;left:247px;top:311px;width:1008px;height:164px;border:3px solid #deebf7;background:#fff"></div>
<span id="t62" class="t" style="left:249.29px;top:315.00px;font-size:15.9px;font-weight:400;color:#000;">Bitte drucken Sie die Rechnung und versenden Sie sie</span>
</section>
<footer class="g" id="actions">
<svg style="position:absolute;left:1022px;top:508px" width="19" height="19" viewBox="0 0 19 19"><circle cx="7.4" cy="7.4" r="5.6" fill="none" stroke="#0a57a5" stroke-width="3"/><path stroke="#0a57a5" stroke-width="3.4" stroke-linecap="round" d="M11.8 11.8L17 17" fill="none"/></svg>
<span id="t63" class="t" style="left:1050.32px;top:510.50px;font-size:16px;font-weight:400;color:#1560ae;letter-spacing:0.434px;">Volltextsuche</span>
<svg style="position:absolute;left:1169px;top:508.4px" width="19.6" height="19.6" viewBox="0 0 19.6 19.6"><path stroke="#e0301e" stroke-width="5.3" stroke-linecap="round" d="M3 3L16.6 16.6M16.6 3L3 16.6" fill="none"/></svg>
<span id="t64" class="t" style="left:1194.28px;top:510.50px;font-size:16px;font-weight:400;color:#1560ae;letter-spacing:0.385px;">Schließen</span>
</footer>
<div class="g" id="ctxmenu" role="menu">
<div style="position:absolute;left:630.5px;top:111.5px;width:299.5px;height:227.5px;background:#fff;border:1px solid #dae3eb"></div>
<div style="position:absolute;left:632.5px;top:312px;width:297.3px;height:26.6px;background:#b2e2fe;"></div>
<div style="position:absolute;left:672.5px;top:140.6px;width:255.5px;height:1.25px;background:#2e75b6;"></div>
<div style="position:absolute;left:672.5px;top:170.3px;width:255.5px;height:1.25px;background:#2e75b6;"></div>
<div style="position:absolute;left:672.5px;top:253.4px;width:255.5px;height:1.25px;background:#2e75b6;"></div>
<div style="position:absolute;left:672.5px;top:283.0px;width:255.5px;height:1.25px;background:#2e75b6;"></div>
<svg style="position:absolute;left:642.2px;top:118.4px" width="20" height="15" viewBox="0 0 20 15"><text x="-0.2" y="14.1" font-family="Liberation Sans,sans-serif" font-weight="700" font-size="16.7" fill="#0a57a5">A</text><text x="11.3" y="12.2" font-family="Liberation Sans,sans-serif" font-weight="400" font-size="16.7" fill="#a9c51c" stroke="#a9c51c" stroke-width=".35" textLength="7.6" lengthAdjust="spacingAndGlyphs">A</text></svg>
<span id="t65" class="t" style="left:678.09px;top:120.01px;font-size:14.6px;font-weight:400;color:#4a4a4a;letter-spacing:0.181px;">Schriftart</span>
<span id="t66" class="t" style="left:820.12px;top:120.01px;font-size:14.6px;font-weight:400;color:#4a4a4a;letter-spacing:0.073px;">Umsch+Strg+D</span>
<svg style="position:absolute;left:643px;top:146.8px" width="18" height="19" viewBox="0 0 18 19"><g transform="translate(0.1,-0.6)"><path fill="#0a57a5" d="M1.1 0H6.90V3.50H10.4V11.700000000000001Q10.4 12.8 9.3 12.8H1.1Q0 12.8 0 11.700000000000001V1.1Q0 0 1.1 0Z"/><path fill="#0a57a5" d="M7.50 0.2L10.20 2.90H7.50Z"/></g><path fill="#fff" d="M5.8 5.3H14.4L18.2 9V19.9H5.8Z"/><g transform="translate(6.9,6.4)"><path fill="#0a57a5" d="M1.1 0H6.70V3.50H10.2V11.3Q10.2 12.4 9.1 12.4H1.1Q0 12.4 0 11.3V1.1Q0 0 1.1 0Z"/><path fill="#0a57a5" d="M7.30 0.2L10.00 2.90H7.30Z"/></g></svg>
<span id="t67" class="t" style="left:677.55px;top:150.01px;font-size:14.6px;font-weight:400;color:#4a4a4a;letter-spacing:0.280px;">Kopieren</span>
<svg style="position:absolute;left:642.2px;top:176.2px" width="20" height="20" viewBox="0 0 20 20"><rect x="0" y="0" width="18.8" height="18.6" rx="1.4" fill="#0a57a5"/><rect x="1.8" y="4.4" width="15.2" height="12.6" fill="#fff"/><path stroke="#0a57a5" stroke-opacity=".75" stroke-width="1" d="M1.8 7.6H17M1.8 10.7H17M1.8 13.8H17M5.3 4.4V17M12 4.4V17M14.7 4.4V17" fill="none"/><rect x="5.8" y="4.4" width="3.2" height="12.6" fill="#a9c51c"/></svg>
<span id="t68" class="t" style="left:677.55px;top:179.01px;font-size:14.6px;font-weight:400;color:#4a4a4a;letter-spacing:0.034px;">Fixierung setzen bis Spalte Betreff</span>
<svg style="position:absolute;left:642.2px;top:203px" width="20" height="20" viewBox="0 0 20 20"><rect x="0" y="0" width="18.8" height="18.6" rx="1.4" fill="#0a57a5"/><rect x="1.8" y="4.4" width="15.2" height="12.6" fill="#fff"/><path stroke="#0a57a5" stroke-opacity=".75" stroke-width="1" d="M1.8 7.6H17M1.8 10.7H17M1.8 13.8H17M5.3 4.4V17M12 4.4V17M14.7 4.4V17" fill="none"/><rect x="5.8" y="4.4" width="3.2" height="12.6" fill="#a9c51c"/><path stroke="#fff" stroke-width="5.4" stroke-linecap="round" d="M11 11L17.6 17.6M17.6 11L11 17.6" fill="none"/><path stroke="#e0301e" stroke-width="2.8" stroke-linecap="round" d="M11 11L17.6 17.6M17.6 11L11 17.6" fill="none"/></svg>
<span id="t69" class="t" style="left:677.55px;top:206.01px;font-size:14.6px;font-weight:400;color:#4a4a4a;letter-spacing:0.231px;">Fixierung aufheben</span>
<svg style="position:absolute;left:641.6px;top:229.8px" width="19.4" height="19.4" viewBox="-0.1 -0.1 20.2 20.2"><circle cx="10" cy="10" r="7.1" fill="#0a57a5"/><rect x="8.05" y="0.35" width="3.9" height="5" rx="1.5" fill="#0a57a5" transform="rotate(0 10 10)"/><rect x="8.05" y="0.35" width="3.9" height="5" rx="1.5" fill="#0a57a5" transform="rotate(45 10 10)"/><rect x="8.05" y="0.35" width="3.9" height="5" rx="1.5" fill="#0a57a5" transform="rotate(90 10 10)"/><rect x="8.05" y="0.35" width="3.9" height="5" rx="1.5" fill="#0a57a5" transform="rotate(135 10 10)"/><rect x="8.05" y="0.35" width="3.9" height="5" rx="1.5" fill="#0a57a5" transform="rotate(180 10 10)"/><rect x="8.05" y="0.35" width="3.9" height="5" rx="1.5" fill="#0a57a5" transform="rotate(225 10 10)"/><rect x="8.05" y="0.35" width="3.9" height="5" rx="1.5" fill="#0a57a5" transform="rotate(270 10 10)"/><rect x="8.05" y="0.35" width="3.9" height="5" rx="1.5" fill="#0a57a5" transform="rotate(315 10 10)"/><circle cx="10" cy="10" r="4" fill="#fff"/><circle cx="10" cy="10" r="1.85" fill="#0a57a5"/></svg>
<span id="t70" class="t" style="left:677.55px;top:233.01px;font-size:14.6px;font-weight:400;color:#4a4a4a;letter-spacing:0.427px;">Konfiguration</span>
<svg style="position:absolute;left:642px;top:259.6px" width="19" height="19.4" viewBox="0 0 19 19.4"><path fill="#0a57a5" d="M0 2.2L10.9 0V19.2L0 17Z"/><path fill="#0a57a5" d="M11.4 2.2H17.9Q18.9 2.2 18.9 3.2V15.5Q18.9 16.5 17.9 16.5H11.4Z"/><path stroke="#fff" stroke-width="1.3" d="M12.1 5.1H14.6M15.4 5.1H17.8M12.1 8H14.6M15.4 8H17.8M12.1 10.9H14.6M15.4 10.9H17.8M12.1 13.8H14.6M15.4 13.8H17.8" fill="none"/><path stroke="#fff" stroke-width="2" d="M2.8 5.6L9 13.2M9 5.6L2.8 13.2" fill="none"/></svg>
<span id="t71" class="t" style="left:677.55px;top:263.01px;font-size:14.6px;font-weight:400;color:#4a4a4a;letter-spacing:0.161px;">Microsoft Excel</span>
<div style="position:absolute;left:646.5px;top:294px;width:9px;height:9px;border-radius:50%;background:#0a57a5"></div>
<span id="t72" class="t" style="left:677.55px;top:293.01px;font-size:14.6px;font-weight:400;color:#4a4a4a;letter-spacing:0.386px;">Einordnung</span>
<span id="t73" class="t" style="left:677.55px;top:319.01px;font-size:14.6px;font-weight:400;color:#4a4a4a;letter-spacing:0.164px;">Fälligkeit</span>
</div>
</body></html>
